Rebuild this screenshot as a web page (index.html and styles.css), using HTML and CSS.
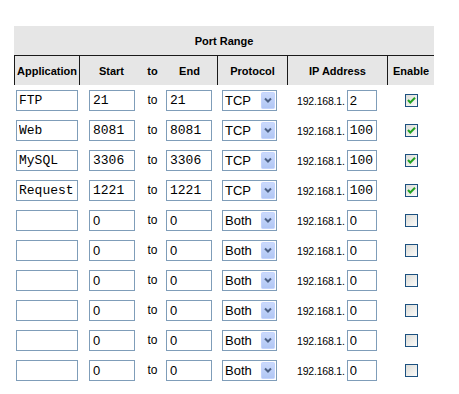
FILE: index.html
```html
<!DOCTYPE html>
<html lang="en">
<head>
  <meta charset="UTF-8">
  <meta name="viewport" content="width=device-width, initial-scale=1.0">
  <title>Port Range Forwarding</title>
  <link rel="stylesheet" href="styles.css">
</head>
<body>
  <table class="ports">
    <colgroup>
      <col class="c-app"><col class="c-start"><col class="c-to"><col class="c-end">
      <col class="c-proto"><col class="c-ip"><col class="c-en">
    </colgroup>
    <thead>
      <tr class="title-row">
        <th colspan="7">Port Range</th>
      </tr>
      <tr class="head-row">
        <th class="sep">Application</th>
        <th class="sep">Start</th>
        <th>to</th>
        <th>End</th>
        <th class="sep">Protocol</th>
        <th class="sep">IP Address</th>
        <th class="sep">Enable</th>
      </tr>
    </thead>
    <tbody id="rows"></tbody>
  </table>

  <script>
    const rules = [
      { app: 'FTP', start: '21', end: '21', proto: 'TCP', ip: '2', on: true },
      { app: 'Web', start: '8081', end: '8081', proto: 'TCP', ip: '100', on: true },
      { app: 'MySQL', start: '3306', end: '3306', proto: 'TCP', ip: '100', on: true },
      { app: 'Request', start: '1221', end: '1221', proto: 'TCP', ip: '100', on: true }
    ];
    while (rules.length < 10) {
      rules.push({ app: '', start: '0', end: '0', proto: 'Both', ip: '0', on: false });
    }

    const arrow = '<svg class="arrow" width="14" height="17" viewBox="0 0 14 17">' +
      '<defs><linearGradient id="g" x1="0" y1="0" x2="0" y2="1">' +
      '<stop offset="0" stop-color="#cbdafc"/><stop offset="1" stop-color="#b0c6f4"/></linearGradient></defs>' +
      '<rect x="0.5" y="0.5" width="13" height="16" rx="1" fill="url(#g)" stroke="#c3d3fd"/>' +
      '<path d="M4 6.5 L7 9.5 L10 6.5" fill="none" stroke="#4d6185" stroke-width="2"/></svg>';
    const tick = '<svg class="tick" width="13" height="13" viewBox="0 0 13 13">' +
      '<path d="M3 6 L5.3 8.5 L10 3.8" fill="none" stroke="#21a121" stroke-width="2"/></svg>';

    const body = document.getElementById('rows');
    rules.forEach(function (r) {
      const mono = v => (v === '0' || v === '2') ? 'txt sans' : 'txt';
      const tr = document.createElement('tr');
      tr.innerHTML =
        '<td class="app"><input class="txt" type="text" value="' + r.app + '"></td>' +
        '<td class="start"><input class="' + mono(r.start) + ' port" type="text" value="' + r.start + '"></td>' +
        '<td class="to">to</td>' +
        '<td class="end"><input class="' + mono(r.end) + ' port" type="text" value="' + r.end + '"></td>' +
        '<td class="proto"><span class="sel"><select>' +
          '<option' + (r.proto === 'TCP' ? ' selected' : '') + '>TCP</option>' +
          '<option>UDP</option>' +
          '<option' + (r.proto === 'Both' ? ' selected' : '') + '>Both</option>' +
        '</select>' + arrow + '</span></td>' +
        '<td class="ip"><span class="prefix">192.168.1.</span><input class="' + mono(r.ip) + ' host" type="text" value="' + r.ip + '"></td>' +
        '<td class="en"><span class="box">' + (r.on ? tick : '') + '</span></td>';
      body.appendChild(tr);
    });
  </script>
</body>
</html>
```

FILE: styles.css
```css
body {
  margin: 0;
  padding: 26px 0 0 14px;
  font-family: "Liberation Sans", Arial, sans-serif;
  background: #fff;
  color: #000;
}

.ports {
  width: 420px;
  table-layout: fixed;
  border-collapse: separate;
  border-spacing: 0;
}

.c-app { width: 65px; }
.c-start { width: 64px; }
.c-to { width: 19px; }
.c-end { width: 55px; }
.c-proto { width: 70px; }
.c-ip { width: 100px; }
.c-en { width: 47px; }

th {
  background: #e6e6e6;
  font-size: 11px;
  font-weight: bold;
  padding: 0;
  text-align: center;
  white-space: nowrap;
}

.title-row th {
  height: 29px;
  border-bottom: 1px solid #1a1a1a;
}

.head-row th {
  height: 29px;
}

.head-row th.sep {
  border-left: 1px solid #1a1a1a;
}

td {
  height: 30px;
  padding: 0;
  vertical-align: middle;
  white-space: nowrap;
}

.txt {
  box-sizing: border-box;
  height: 21px;
  border: 1px solid #7f9db9;
  padding: 0 2px;
  margin: 0;
  font-family: "Liberation Mono", "Courier New", monospace;
  font-size: 13px;
  color: #000;
  background: #fff;
  outline: none;
}

.txt.sans {
  font-family: "Liberation Sans", Arial, sans-serif;
}

.app { padding-left: 2px; }
.app .txt { width: 62px; }

.start { padding-left: 10px; }
.end { padding-left: 4px; }
.port { width: 46px; padding-left: 3px; }

.to {
  text-align: center;
  font-size: 12px;
}

.proto { padding-left: 5px; }

.sel {
  position: relative;
  display: inline-block;
  vertical-align: middle;
}

.sel select {
  appearance: none;
  -webkit-appearance: none;
  box-sizing: border-box;
  width: 55px;
  height: 21px;
  border: 1px solid #7f9db9;
  border-radius: 0;
  background: #fff;
  padding: 0 0 0 2px;
  margin: 0;
  font-family: "Liberation Sans", Arial, sans-serif;
  font-size: 13px;
  color: #000;
  outline: none;
}

.sel .arrow {
  position: absolute;
  right: 2px;
  top: 2px;
  pointer-events: none;
}

.ip { padding-left: 10px; }

.prefix {
  font-size: 10.5px;
  letter-spacing: -0.2px;
  vertical-align: middle;
}

.host {
  width: 30px;
  margin-left: 2px;
  vertical-align: middle;
}

.en { text-align: center; padding-left: 2px; }

.box {
  display: inline-block;
  position: relative;
  width: 13px;
  height: 13px;
  box-sizing: border-box;
  border: 1px solid #1c5180;
  background: linear-gradient(135deg, #dcdcd7, #fbfbfa);
  vertical-align: middle;
}

.box .tick {
  position: absolute;
  left: -1px;
  top: -1px;
}
```
